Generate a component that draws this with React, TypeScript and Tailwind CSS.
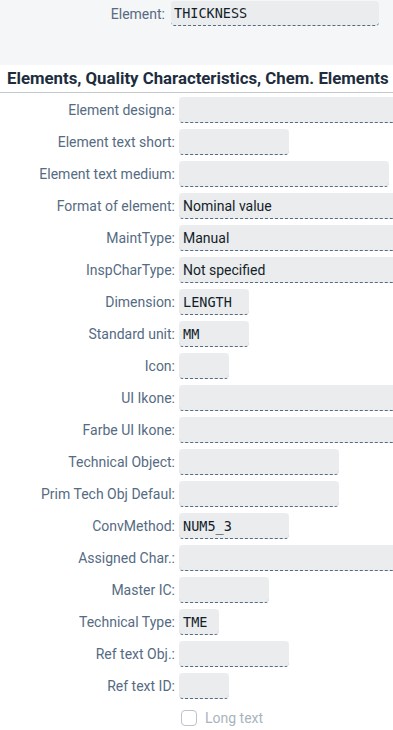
import React from 'react';

type Row = { label: string; w: string; value?: string; mono?: boolean };

const rows: Row[] = [
  { label: 'Element designa:', w: 'w-[230px]' },
  { label: 'Element text short:', w: 'w-[110px]' },
  { label: 'Element text medium:', w: 'w-[210px]' },
  { label: 'Format of element:', w: 'w-[230px]', value: 'Nominal value' },
  { label: 'MaintType:', w: 'w-[230px]', value: 'Manual' },
  { label: 'InspCharType:', w: 'w-[230px]', value: 'Not specified' },
  { label: 'Dimension:', w: 'w-[70px]', value: 'LENGTH', mono: true },
  { label: 'Standard unit:', w: 'w-[70px]', value: 'MM', mono: true },
  { label: 'Icon:', w: 'w-[50px]' },
  { label: 'UI Ikone:', w: 'w-[230px]' },
  { label: 'Farbe UI Ikone:', w: 'w-[230px]' },
  { label: 'Technical Object:', w: 'w-[160px]' },
  { label: 'Prim Tech Obj Defaul:', w: 'w-[160px]' },
  { label: 'ConvMethod:', w: 'w-[110px]', value: 'NUM5_3', mono: true },
  { label: 'Assigned Char.:', w: 'w-[230px]' },
  { label: 'Master IC:', w: 'w-[90px]' },
  { label: 'Technical Type:', w: 'w-[40px]', value: 'TME', mono: true },
  { label: 'Ref text Obj.:', w: 'w-[110px]' },
  { label: 'Ref text ID:', w: 'w-[50px]' },
];

const Field = ({ w, value, mono }: { w: string; value?: string; mono?: boolean }) => (
  <div
    className={`${w} shrink-0 h-[26px] rounded-[4px] bg-[#eaecee] border-b border-dashed border-[#556b82] flex items-center px-[4px] pt-px text-[14px] text-[#131e29] whitespace-nowrap overflow-hidden`}
    style={mono ? { fontFamily: '"DejaVu Sans Mono", monospace', fontSize: 13.5 } : undefined}
  >
    {value}
  </div>
);

const App = () => {
  return (
    <div className="w-[393px] h-[730px] overflow-hidden bg-white font-['Roboto',sans-serif]">
      <div className="bg-[#f5f6f7] h-[65px] pt-px">
        <div className="flex items-center">
          <div className="w-[165px] pt-px text-right text-[14px] text-[#556b82]">Element:</div>
          <div className="ml-[6px] w-[208px] h-[25px] rounded-[4px] bg-[#eaecee] border-b border-dashed border-[#556b82] flex items-center px-[3px] pt-px text-[#131e29] font-['DejaVu_Sans_Mono',monospace] text-[13.5px]">
            THICKNESS
          </div>
        </div>
      </div>
      <div className="h-[28px] flex items-center px-[7px] border-b border-[#c4c9ce] whitespace-nowrap">
        <h2 className="text-[16.8px] font-bold text-[#1d2d3e]">
          Elements, Quality Characteristics, Chem. Elements
        </h2>
      </div>
      <div className="pt-px">
        {rows.map((r) => (
          <div key={r.label} className="h-[32px] flex items-center">
            <div className="w-[175px] shrink-0 pt-px text-right text-[14px] text-[#556b82] whitespace-nowrap">{r.label}</div>
            <div className="ml-[4px]">
              <Field w={r.w} value={r.value} mono={r.mono} />
            </div>
          </div>
        ))}
        <div className="h-[32px] flex items-center pl-[181px]">
          <div className="w-[16px] h-[16px] rounded-[4px] border border-[#bcc3ca] bg-white" />
          <span className="ml-[8px] text-[14px] text-[#a9b4be]">Long text</span>
        </div>
      </div>
    </div>
  );
};

export default App;
